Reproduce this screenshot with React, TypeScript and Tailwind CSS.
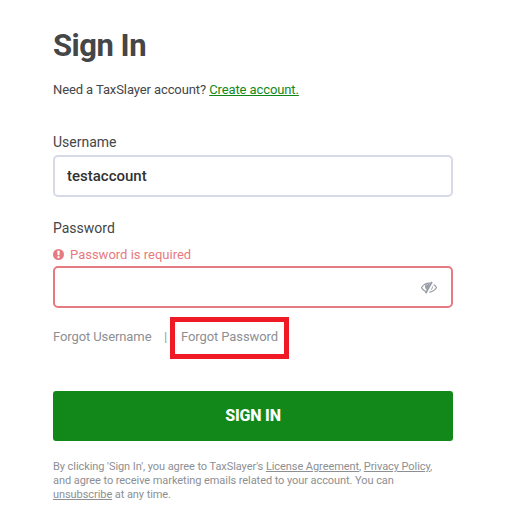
import { useState } from "react";

function AlertIcon() {
  return (
    <svg viewBox="0 0 12 12" className="h-[11px] w-[11px] shrink-0" aria-hidden="true">
      <circle cx="6" cy="6" r="6" fill="#e57b81" />
      <path d="M4.7 1.800h2.600l-.3 5H5z" fill="#fff" />
      <rect x="4.900" y="7.800" width="2.200" height="2.200" fill="#fff" />
    </svg>
  );
}

function EyeSlashIcon() {
  return (
    <svg viewBox="0 0 1792 1792" className="h-4 w-4" fill="currentColor" aria-hidden="true">
      <path d="M555 1335l78-141q-87-63-136-159t-49-203q0-121 61-225-229 117-381 353 167 258 427 375zm389-759q0-20-14-34t-34-14q-125 0-214.500 89.500t-89.500 214.500q0 20 14 34t34 14 34-14 14-34q0-86 61-147t147-61q20 0 34-14t14-34zm363-191q0 7-1 9-106 189-316 567t-315 566l-49 89q-10 16-28 16-12 0-134-70-16-10-16-28 0-12 44-87-143-65-263.500-173t-208.500-245q-20-31-20-69t20-69q153-235 380-371t496-136q89 0 180 17l54-97q10-16 28-16 5 0 18 6t31 15.500 33 18.500 31.500 18.500 19.500 11.500q16 10 16 27zm37 447q0 139-79 253.500t-209 164.500l280-502q8 45 8 84zm448 128q0 35-20 69-39 64-109 145-150 172-347.500 267t-419.500 95l74-132q212-18 392.500-137t301.500-307q-115-179-282-294l63-112q95 64 182.500 153t144.500 184q20 34 20 69z" />
      <path d="M700 640q90-110 240-112l-60 110-290 500q-60-70-70-180 0-200 180-318z" />
    </svg>
  );
}

export default function App() {
  const [username, setUsername] = useState("testaccount");
  const [password, setPassword] = useState("");
  const [visible, setVisible] = useState(false);

  return (
    <main className="min-h-[527px] bg-white pl-[53px] pt-[26px] font-['Roboto',sans-serif] text-[#444648]">
      <form className="w-[400px]" onSubmit={(event) => event.preventDefault()}>
        <h1 className="text-[31px] leading-10 font-bold tracking-[-0.5px]">Sign In</h1>
        <p className="mt-[14px] text-[13px] leading-5 tracking-[-0.1px]">
          Need a TaxSlayer account?{" "}
          <a href="#" className="text-[#12881b] underline">
            Create account.
          </a>
        </p>

        <label htmlFor="username" className="mt-8 block text-sm leading-5">
          Username
        </label>
        <input
          id="username"
          value={username}
          onChange={(event) => setUsername(event.target.value)}
          className="mt-[3px] block h-[42px] w-full rounded-[5px] border-2 border-[#d7d9e7] px-3 text-[15px] font-medium text-[#303234] outline-none"
        />

        <label htmlFor="password" className="mt-[21px] block text-sm leading-5">
          Password
        </label>
        <div className="mt-2 flex h-4 items-center gap-1.5 text-[13px] text-[#e57b81]">
          <AlertIcon />
          <span className="pt-0.5">Password is required</span>
        </div>
        <div className="mt-1 flex h-[42px] items-center rounded-[5px] border-2 border-[#e57b81] pr-3.5 pl-3">
          <input
            id="password"
            type={visible ? "text" : "password"}
            value={password}
            onChange={(event) => setPassword(event.target.value)}
            className="min-w-0 flex-1 outline-none"
          />
          <button
            type="button"
            aria-label="Toggle password visibility"
            className="text-[#9a9fa7]"
            onClick={() => setVisible(!visible)}
          >
            <EyeSlashIcon />
          </button>
        </div>

        <div className="mt-[9px] flex h-[42px] items-start text-[13px] leading-5 tracking-[-0.1px] text-[#8d8f93]">
          <a href="#" className="mt-[10px] w-[111px]">
            Forgot Username
          </a>
          <span className="mt-[10px] w-[6px] text-[#7d9fb8]">|</span>
          <a
            href="#"
            className="flex h-[42px] w-[119px] items-start justify-center border-[5px] border-[#ef1a23] pt-[5px] whitespace-nowrap"
          >
            Forgot Password
          </a>
        </div>

        <button
          type="submit"
          className="mt-8 block h-[50px] w-full rounded-[3px] bg-[#12881b] text-base font-extrabold tracking-[-0.2px] text-white"
        >
          SIGN IN
        </button>

        <p className="mt-[19px] text-[11px] leading-[14px] tracking-[-0.068px] whitespace-nowrap text-[#8d8f93]">
          By clicking 'Sign In', you agree to TaxSlayer's{" "}
          <a href="#" className="underline">License Agreement</a>,{" "}
          <a href="#" className="underline">Privacy Policy</a>,
          <br />
          and agree to receive marketing emails related to your account. You can
          <br />
          <a href="#" className="underline">unsubscribe</a> at any time.
        </p>
      </form>
    </main>
  );
}
